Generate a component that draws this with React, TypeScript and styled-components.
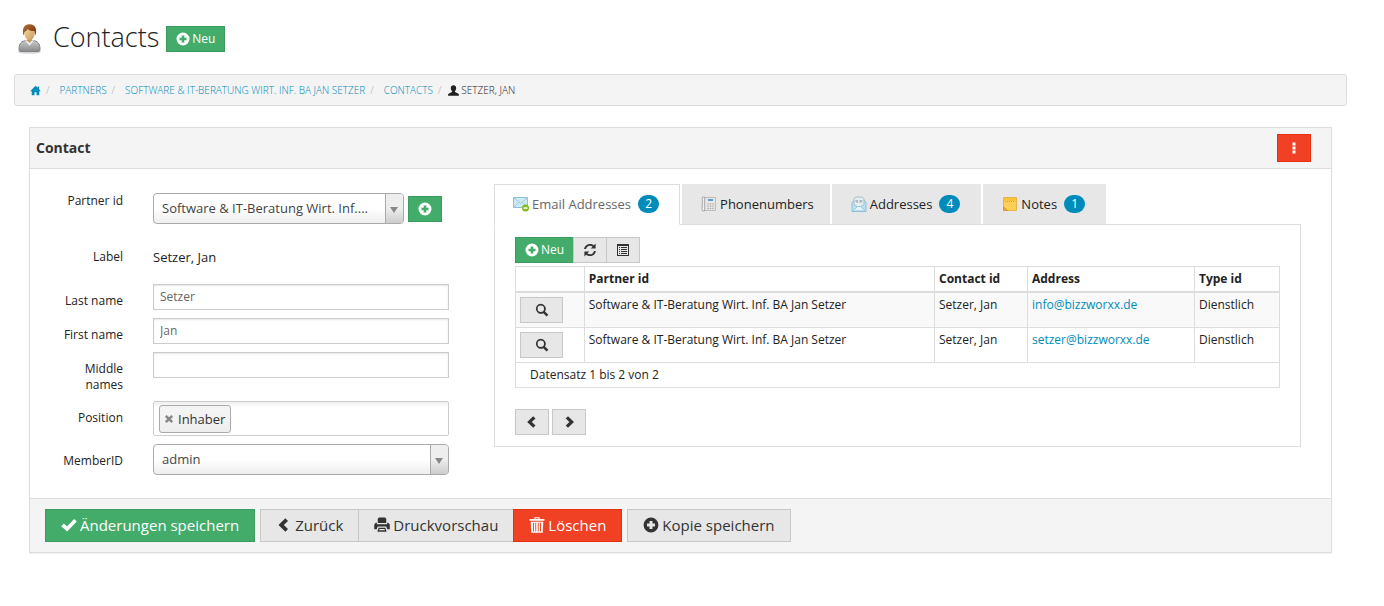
import React from "react";
import styled, { createGlobalStyle, css } from "styled-components";

const GlobalStyle = createGlobalStyle`
  *, *::before, *::after { box-sizing: border-box; }
  body {
    margin: 0;
    background: #fff;
    color: #222;
    font-family: "Open Sans", "Liberation Sans", sans-serif;
    font-size: 12px;
    line-height: 16px;
  }
  button, input, select { font: inherit; color: inherit; margin: 0; }
`;

/* ---------- icons ---------- */

const glyphs = {
  plus: "M7 .5a6.5 6.5 0 1 1 0 13a6.5 6.5 0 1 1 0-13zM5.7 3.5v2.2H3.5v2.6h2.2v2.2h2.6V8.3h2.2V5.7H8.3V3.5z",
  home: "M7 .8L.2 7.8h2V13.2h3.5V9.2h2.6v4h3.5V7.8h2L11.6 5.4V1.9H9.8v1.7z",
  user: "M7 .3c2 0 3.4 1.300 3.400 3.400c0 1.700-.5 3.100-1.500 4c-.3.8 0 1.300.7 1.600l3.100 1.400c.9.4 1.200 1 1.200 1.800v1.200H.1v-1.200c0-.8.3-1.400 1.200-1.800l3.100-1.400c.7-.3 1-.8.7-1.600c-1-.9-1.500-2.300-1.500-4C3.600 1.600 5 .3 7 .3z",
  search: "M5.800.8a5 5 0 0 1 4.200 7.700l3.300 3.200l-1.700 1.700l-3.300-3.200A5 5 0 1 1 5.800.8zm0 1.800a3.200 3.200 0 1 0 0 6.400a3.200 3.200 0 0 0 0-6.400z",
  refresh: "M1.100 6.100C1.500 3 4 .9 7 .9c1.500 0 2.800.5 3.900 1.400L12.600.6v5H7.700l1.900-1.900C8.900 3.100 8 2.700 7 2.700c-2 0-3.600 1.400-4 3.400zM12.900 7.900c-.4 3.100-2.900 5.200-5.900 5.200c-1.500 0-2.800-.5-3.900-1.400l-1.700 1.700v-5h4.900l-1.900 1.900c.7.600 1.600 1 2.600 1c2 0 3.600-1.400 4-3.400z",
  list: "M1 1h12v12H1zM2 3v9h10V3zM3 4h1v1H3zM5 4h6v1H5zM3 6h1v1H3zM5 6h6v1H5zM3 8h1v1H3zM5 8h6v1H5zM3 10h1v1H3zM5 10h6v1H5z",
  check: "M.2 8L2.500 5.700L5.300 8.400L11.500 1.800L13.800 4L5.400 12.600z",
  left: "M8.200 1.200L10.500 3.500L6.800 7L10.500 10.500L8.200 12.800L2.200 7z",
  right: "M6 1.200L3.700 3.500L7.400 7L3.700 10.500L6 12.800L12 7z",
  print: "M4.300.5h5.400l1 1v3.700H3.300V1.500zM1.500 5h1v1.300h9V5h1l1.300 1.500v4.200H11.600L10.800 8.300H3.200L2.400 10.700H.2V6.500zM4 9.400h6l1 3.600H3zM4.700 10.600l-.2.900h5l-.2-.9z",
  trash: "M4.700.3h4.600v1.500h4.200v1.500H.5V1.800h4.200zM5.700 1v.8h2.600V1zM1.500 4.100h11L12 13.700H2zM3.500 5v7.600h.8V5zM5.500 5v7.600h.8V5zM7.700 5v7.600h.8V5zM9.700 5v7.600h.8V5z",
  more: "M5.500 1.500h3v3h-3zM5.500 5.500h3v3h-3zM5.500 9.500h3v3h-3z",
  close: "M3.800 1.300L7 4.500L10.200 1.300L12.700 3.800L9.500 7L12.700 10.200L10.200 12.700L7 9.500L3.800 12.700L1.300 10.200L4.500 7L1.300 3.800z",
};

const GlyphSvg = styled.svg`
  flex: none;
  display: block;
  fill: currentColor;
`;

function Glyph({ name, size = 14 }: { name: keyof typeof glyphs; size?: number }) {
  return (
    <GlyphSvg width={size} height={size} viewBox="0 0 14 14" aria-hidden="true">
      <path d={glyphs[name]} fillRule="evenodd" />
    </GlyphSvg>
  );
}

function ContactAvatar() {
  return (
    <GlyphSvg width="32" height="32" viewBox="0 0 32 32" aria-hidden="true">
      <defs>
        <linearGradient id="suit" x1="0" y1="0" x2="0" y2="1">
          <stop offset="0" stopColor="#c9c9c9" />
          <stop offset="1" stopColor="#88898b" />
        </linearGradient>
        <linearGradient id="hair" x1="0" y1="0" x2="1" y2="1">
          <stop offset="0" stopColor="#b0743a" />
          <stop offset=".6" stopColor="#8a4a1a" />
          <stop offset="1" stopColor="#6b3410" />
        </linearGradient>
        <linearGradient id="skin" x1="0" y1="0" x2="1" y2="1">
          <stop offset="0" stopColor="#f6d79c" />
          <stop offset="1" stopColor="#c79a5c" />
        </linearGradient>
      </defs>
      <ellipse cx="15.500" cy="29" rx="11.500" ry="1.800" fill="#000" opacity=".16" />
      <path d="M7 28.500c-1.500 0-2-.7-2-2c0-4.500 1.200-7.700 5.500-8.700h10c4.300 1 5.500 4.200 5.500 8.700c0 1.300-.5 2-2 2z" fill="url(#suit)" stroke="#808285" />
      <path d="M11 17.500L15.500 22.500L20 17.500z" fill="#f1f2f6" />
      <path d="M13 14h5v3.500l-2.500 2.500l-2.500-2.500z" fill="#c4975d" />
      <path d="M10 7.500c0-4 11-4 11 0c0 5-1.500 9.500-5.500 9.500S10 12.500 10 7.500z" fill="url(#skin)" />
      <path d="M9.500 12.500c-1.300-5-.7-11.200 6-11.200s7.500 5.800 6 11.200l-1-4.500c-3 .3-5.500-.5-7-2c-.5 2-2.500 2.500-3 3z" fill="url(#hair)" />
    </GlyphSvg>
  );
}

function MailIcon() {
  return (
    <GlyphSvg width="16" height="16" viewBox="0 0 16 16" aria-hidden="true">
      <path d="M.5 1.500h14v10H.5z" fill="#cdeaf7" stroke="#8fc0da" />
      <path d="M1 2l6.500 5.500L14 2M1 11l4.500-4.500M14 11L9.500 6.500" fill="none" stroke="#9cc8df" />
      <circle cx="12.500" cy="12" r="3.500" fill="#86b81f" />
      <path d="M10.500 11.300h4v1.500h-4z" fill="#fff" />
    </GlyphSvg>
  );
}

function PhoneIcon() {
  return (
    <GlyphSvg width="16" height="16" viewBox="0 0 16 16" aria-hidden="true">
      <path d="M3.500 1.500h11v13h-11z" fill="#e9e6e2" stroke="#bdbbb8" />
      <path d="M1.500 1h2.200v14H1.500C.8 14 1 11 1.300 8S.8 2 1.500 1z" fill="#eee" stroke="#a9aab0" />
      <path d="M7 3h5v2H7z" fill="#5d9fd4" />
      <path d="M6.500 8h1.300M8.900 8h1.300M11.300 8h1.300M6.500 10.200h1.300M8.900 10.200h1.300M11.300 10.200h1.300M6.500 12.400h1.300M8.900 12.400h1.300M11.300 12.400h1.300" stroke="#9a9ca2" />
    </GlyphSvg>
  );
}

function OpenMailIcon() {
  return (
    <GlyphSvg width="16" height="16" viewBox="0 0 16 16" aria-hidden="true">
      <path d="M1 6.500L4 3h8l3 3.500v9H1z" fill="#bfe1f2" stroke="#8bbdd8" />
      <path d="M3 2.500L5 1h6l2 1.500v6l-5 3.500l-5-3.500z" fill="#e4edf0" stroke="#a9bcc5" />
      <path d="M4.500 4h2.500v3L4.500 6zM8.500 4h3v2l-3 1z" fill="#a4b9c4" />
      <path d="M1.500 15L6.500 10.500h3L14.500 15z" fill="#e5f5fc" stroke="#94c3dc" />
    </GlyphSvg>
  );
}

function NoteIcon() {
  return (
    <GlyphSvg width="16" height="16" viewBox="0 0 16 16" aria-hidden="true">
      <path d="M1.500 1.500h13v13h-9l-4-3.500z" fill="#ffd057" stroke="#e8b247" />
      <path d="M2 2h12v3H2z" fill="#fbc23b" />
      <path d="M3 5.500h10" stroke="#d9a03a" strokeDasharray="1 1" />
      <path d="M1.500 11l4 3.500h-4z" fill="#e9ad3a" stroke="#d8992a" />
    </GlyphSvg>
  );
}

/* ---------- buttons ---------- */

type Tone = "plain" | "success" | "alert";

const tones = {
  plain: css`background: #e7e7e7; border-color: #c7c7c7; color: #333;`,
  success: css`background: #43ac6a; border-color: #3c9a5f; color: #fff;`,
  alert: css`background: #f04124; border-color: #ea2f10; color: #fff;`,
};

const Button = styled.button<{ $tone?: Tone; $joined?: boolean }>`
  display: inline-flex;
  flex: none;
  align-items: center;
  justify-content: center;
  gap: 2px;
  min-width: 34px;
  height: 26px;
  padding: 0 9px;
  border: 1px solid;
  ${({ $tone = "plain" }) => tones[$tone]}
  ${({ $joined }) => $joined && css`margin-left: -1px;`}
  cursor: pointer;
`;

const LargeButton = styled(Button)`
  height: 33px;
  padding: 0 15px 2px;
  font-size: 15px;
  gap: 3px;
`;

const LookupButton = styled(Button)`
  width: 43px;
`;

const MenuButton = styled(Button)`
  height: 28px;
`;

/* ---------- page ---------- */

const Page = styled.div`
  padding: 21px 37px 40px 14px;
`;

const PageHeader = styled.header`
  display: flex;
  align-items: center;
  height: 36px;
`;

const PageTitle = styled.h1`
  margin: 0 7px;
  padding-bottom: 4px;
  font-size: 27px;
  line-height: 32px;
  font-weight: 300;
`;

const Breadcrumbs = styled.ol`
  display: flex;
  align-items: center;
  height: 32px;
  margin: 17px 0 21px;
  padding: 0 15px;
  list-style: none;
  background: #f4f4f4;
  border: 1px solid #dcdcdc;
  border-radius: 3px;
  font-size: 10px;
  font-weight: 300;
  text-transform: uppercase;
`;

const Crumb = styled.li<{ $current?: boolean }>`
  display: flex;
  align-items: center;
  gap: 2px;
  li + &::before {
    content: "/";
    margin: 0 ${({ $current }) => ($current ? 5 : 8)}px 0 5px;
    color: #aaa;
  }
`;

const Link = styled.a`
  color: #008cba;
  text-decoration: none;
`;

const Panel = styled.form`
  margin: 0 15px;
  border: 1px solid #ddd;
  box-shadow: 0 1px 1px rgba(0, 0, 0, 0.05);
`;

const PanelHeader = styled.div`
  display: flex;
  align-items: center;
  justify-content: space-between;
  height: 41px;
  padding: 0 20px 0 6px;
  background: #f4f4f4;
  border-bottom: 1px solid #ddd;
`;

const PanelTitle = styled.h2`
  margin: 0;
  font-size: 14px;
  line-height: 20px;
  font-weight: 700;
  color: #333;
`;

const PanelBody = styled.div`
  display: grid;
  grid-template-columns: 405px minmax(0, 1fr);
  gap: 45px;
  padding: 15px 30px 23px 14px;
`;

const PanelFooter = styled.div`
  display: flex;
  gap: 5px;
  padding: 10px 15px;
  background: #f4f4f4;
  border-top: 1px solid #ddd;
`;

const ButtonGroup = styled.div`
  display: flex;
`;

/* ---------- form ---------- */

const Fields = styled.div`
  display: flex;
  flex-direction: column;
  gap: 8px;
`;

const FieldRow = styled.div<{ $height?: number }>`
  display: grid;
  grid-template-columns: 79px minmax(0, 1fr);
  align-items: start;
  gap: 30px;
  min-height: ${({ $height = 26 }) => $height}px;
`;

const Label = styled.label`
  padding: 9px 0 0 16px;
  text-align: right;
`;

const StaticValue = styled.output`
  padding-top: 9px;
  font-size: 13px;
`;

const TextInput = styled.input`
  width: 100%;
  height: 26px;
  padding: 0 6px 2px;
  border: 1px solid #ccc;
  background: #fff;
  box-shadow: inset 0 1px 2px rgba(0, 0, 0, 0.1);
  color: #666;
`;

const PartnerPicker = styled.div`
  display: flex;
  align-items: center;
  gap: 4px;
  padding-top: 9px;
`;

const SelectBox = styled.div<{ $width?: string }>`
  position: relative;
  width: ${({ $width = "100%" }) => $width};
  &::before {
    content: "";
    position: absolute;
    inset: 1px 1px 1px auto;
    width: 18px;
    border-left: 1px solid #aaa;
    border-radius: 0 3px 3px 0;
    background: linear-gradient(#eee 50%, #ccc);
    pointer-events: none;
  }
  &::after {
    content: "";
    position: absolute;
    right: 6px;
    top: 14px;
    border: 4px solid transparent;
    border-top: 6px solid #888;
    border-bottom: 0;
    pointer-events: none;
  }
`;

const Select = styled.select`
  display: block;
  width: 100%;
  height: 31px;
  padding: 0 26px 2px 8px;
  appearance: none;
  border: 1px solid #aaa;
  border-radius: 4px;
  background: linear-gradient(#fff 50%, #eee);
  font-size: 13px;
  color: #444;
`;

const TokenField = styled.div`
  display: flex;
  align-items: center;
  height: 35px;
  padding: 0 5px;
  border: 1px solid #ccc;
  border-radius: 2px;
  background: linear-gradient(#eee, #fff 15%);
`;

const Token = styled.span`
  display: flex;
  flex: none;
  align-items: center;
  gap: 4px;
  height: 28px;
  padding: 0 5px 0 4px;
  border: 1px solid #aaa;
  border-radius: 3px;
  background: linear-gradient(#f4f4f4 20%, #eee);
  font-size: 13px;
  color: #333;
`;

const TokenRemove = styled.button`
  padding: 0;
  border: 0;
  background: none;
  color: #888;
  cursor: pointer;
`;

const TokenInput = styled.input`
  flex: 1;
  min-width: 0;
  border: 0;
  background: none;
  outline: 0;
`;

/* ---------- tabs ---------- */

const TabList = styled.div`
  display: flex;
  gap: 2px;
`;

const Tab = styled.button<{ $active?: boolean }>`
  display: flex;
  align-items: center;
  gap: 3px;
  height: 41px;
  margin-bottom: -1px;
  padding: 0 15px 2px 18px;
  border: 1px solid #e7e7e7;
  border-bottom-color: #ddd;
  background: #e7e7e7;
  font-size: 13px;
  color: #222;
  cursor: pointer;
  ${({ $active }) =>
    $active &&
    css`
      position: relative;
      border-color: #ddd;
      border-bottom-color: #fff;
      background: #fff;
      color: #666;
    `}
`;

const Badge = styled.span`
  min-width: 21px;
  margin: 0 5px 0 4px;
  padding: 0 6px;
  border-radius: 9px;
  background: #008cba;
  color: #fff;
  font-size: 12px;
  line-height: 18px;
  text-align: center;
`;

const TabPanel = styled.section`
  padding: 12px 20px 11px;
  border: 1px solid #ddd;
`;

const Table = styled.table`
  width: 100%;
  margin: 3px 0 21px;
  border-collapse: collapse;
  table-layout: fixed;
  border: 1px solid #ddd;
  th, td {
    padding: 4px;
    border: 1px solid #ddd;
    text-align: left;
    vertical-align: top;
  }
  thead th { border-bottom-width: 2px; font-weight: 700; }
  tbody tr { height: 35px; }
  tbody tr:nth-child(odd) { background: #f9f9f9; }
  tfoot td { padding-left: 14px; }
`;

const Col = styled.col<{ $width?: string }>`
  width: ${({ $width = "auto" }) => $width};
`;

const Pager = styled.nav`
  display: flex;
  gap: 3px;
`;

const emails = ["info@bizzworxx.de", "setzer@bizzworxx.de"];

const tabs = [
  { label: "Email Addresses", icon: <MailIcon />, count: 2 },
  { label: "Phonenumbers", icon: <PhoneIcon /> },
  { label: "Addresses", icon: <OpenMailIcon />, count: 4 },
  { label: "Notes", icon: <NoteIcon />, count: 1 },
];

export default function App() {
  return (
    <Page>
      <GlobalStyle />
      <PageHeader>
        <ContactAvatar />
        <PageTitle>Contacts</PageTitle>
        <Button $tone="success"><Glyph name="plus" />Neu</Button>
      </PageHeader>

      <nav aria-label="Breadcrumb">
        <Breadcrumbs>
          <Crumb><Link href="#home" aria-label="Home"><Glyph name="home" size={11} /></Link></Crumb>
          <Crumb><Link href="#partners">Partners</Link></Crumb>
          <Crumb><Link href="#partner">Software &amp; IT-Beratung Wirt. Inf. BA Jan Setzer</Link></Crumb>
          <Crumb><Link href="#contacts">Contacts</Link></Crumb>
          <Crumb $current><Glyph name="user" size={11} />Setzer, Jan</Crumb>
        </Breadcrumbs>
      </nav>

      <Panel onSubmit={(e) => e.preventDefault()}>
        <PanelHeader>
          <PanelTitle>Contact</PanelTitle>
          <MenuButton type="button" $tone="alert" aria-label="Menu"><Glyph name="more" /></MenuButton>
        </PanelHeader>

        <PanelBody>
          <Fields>
            <FieldRow $height={48}>
              <Label htmlFor="partner">Partner id</Label>
              <PartnerPicker>
                <SelectBox $width="251px">
                  <Select id="partner"><option>Software &amp; IT-Beratung Wirt. Inf....</option></Select>
                </SelectBox>
                <Button type="button" $tone="success" aria-label="Partner hinzufügen"><Glyph name="plus" /></Button>
              </PartnerPicker>
            </FieldRow>
            <FieldRow $height={36}>
              <Label htmlFor="label">Label</Label>
              <StaticValue id="label">Setzer, Jan</StaticValue>
            </FieldRow>
            <FieldRow>
              <Label htmlFor="last">Last name</Label>
              <TextInput id="last" defaultValue="Setzer" />
            </FieldRow>
            <FieldRow>
              <Label htmlFor="first">First name</Label>
              <TextInput id="first" defaultValue="Jan" />
            </FieldRow>
            <FieldRow>
              <Label htmlFor="middle">Middle names</Label>
              <TextInput id="middle" />
            </FieldRow>
            <FieldRow>
              <Label htmlFor="position">Position</Label>
              <TokenField>
                <Token>
                  <TokenRemove type="button" aria-label="Entfernen"><Glyph name="close" size={10} /></TokenRemove>
                  Inhaber
                </Token>
                <TokenInput id="position" />
              </TokenField>
            </FieldRow>
            <FieldRow>
              <Label htmlFor="member">MemberID</Label>
              <SelectBox>
                <Select id="member"><option>admin</option></Select>
              </SelectBox>
            </FieldRow>
          </Fields>

          <div>
            <TabList role="tablist">
              {tabs.map((tab, i) => (
                <Tab key={tab.label} type="button" role="tab" aria-selected={i === 0} $active={i === 0}>
                  {tab.icon}
                  {tab.label}
                  {tab.count && <Badge>{tab.count}</Badge>}
                </Tab>
              ))}
            </TabList>
            <TabPanel role="tabpanel">
              <ButtonGroup>
                <Button type="button" $tone="success"><Glyph name="plus" />Neu</Button>
                <Button type="button" $joined aria-label="Aktualisieren"><Glyph name="refresh" /></Button>
                <Button type="button" $joined aria-label="Liste"><Glyph name="list" /></Button>
              </ButtonGroup>
              <Table>
                <colgroup>
                  <Col $width="9%" />
                  <Col />
                  <Col $width="93px" />
                  <Col $width="167px" />
                  <Col $width="85px" />
                </colgroup>
                <thead>
                  <tr>
                    <th aria-label="Details" />
                    <th>Partner id</th>
                    <th>Contact id</th>
                    <th>Address</th>
                    <th>Type id</th>
                  </tr>
                </thead>
                <tbody>
                  {emails.map((email) => (
                    <tr key={email}>
                      <td><LookupButton type="button" aria-label="Anzeigen"><Glyph name="search" /></LookupButton></td>
                      <td>Software &amp; IT-Beratung Wirt. Inf. BA Jan Setzer</td>
                      <td>Setzer, Jan</td>
                      <td><Link href={`mailto:${email}`}>{email}</Link></td>
                      <td>Dienstlich</td>
                    </tr>
                  ))}
                </tbody>
                <tfoot>
                  <tr><td colSpan={5}>Datensatz 1 bis 2 von 2</td></tr>
                </tfoot>
              </Table>
              <Pager aria-label="Seiten">
                <Button type="button" aria-label="Vorherige"><Glyph name="left" /></Button>
                <Button type="button" aria-label="Nächste"><Glyph name="right" /></Button>
              </Pager>
            </TabPanel>
          </div>
        </PanelBody>

        <PanelFooter>
          <LargeButton type="submit" $tone="success"><Glyph name="check" size={16} />Änderungen speichern</LargeButton>
          <ButtonGroup>
            <LargeButton type="button"><Glyph name="left" size={16} />Zurück</LargeButton>
            <LargeButton type="button" $joined><Glyph name="print" size={16} />Druckvorschau</LargeButton>
            <LargeButton type="button" $tone="alert" $joined><Glyph name="trash" size={16} />Löschen</LargeButton>
          </ButtonGroup>
          <LargeButton type="button"><Glyph name="plus" size={16} />Kopie speichern</LargeButton>
        </PanelFooter>
      </Panel>
    </Page>
  );
}
